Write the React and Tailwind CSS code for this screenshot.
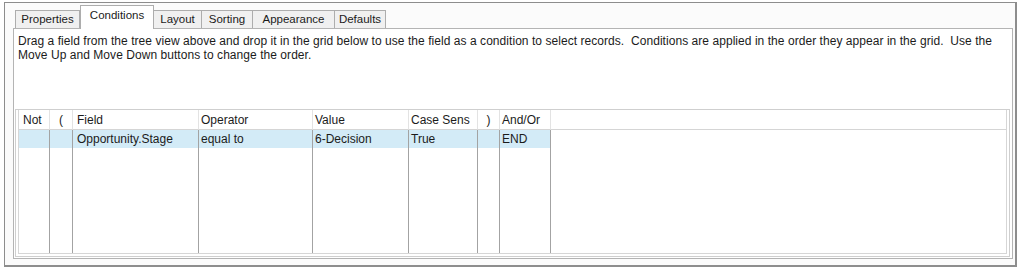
const tabs = ['Properties', 'Conditions', 'Layout', 'Sorting', 'Appearance', 'Defaults'];
const tabWidths = {
  Properties: 'w-[65px]',
  Conditions: 'w-[74px]',
  Layout: 'w-[48px]',
  Sorting: 'w-[51px]',
  Appearance: 'w-[82px]',
  Defaults: 'w-[51px]',
};

// column layout of the conditions grid
const columns = [
  { key: 'not', label: 'Not', w: 'w-[31px]', align: 'pl-[4px]', value: '' },
  { key: 'open', label: '(', w: 'w-[23px]', align: 'justify-center', value: '' },
  { key: 'field', label: 'Field', w: 'w-[126px]', align: 'pl-[4px]', value: 'Opportunity.Stage' },
  { key: 'op', label: 'Operator', w: 'w-[114px]', align: 'pl-[2px]', value: 'equal to' },
  { key: 'value', label: 'Value', w: 'w-[96px]', align: 'pl-[2px]', value: '6-Decision' },
  { key: 'case', label: 'Case Sens', w: 'w-[69px]', align: 'pl-[2px]', value: 'True' },
  { key: 'close', label: ')', w: 'w-[22px]', align: 'justify-center', value: '' },
  { key: 'andor', label: 'And/Or', w: 'w-[51px]', align: 'pl-[2px]', value: 'END' },
];

function Tab({ label, active }) {
  if (active) {
    return (
      <div
        className={`${tabWidths[label]} h-[24px] -mb-px relative z-10 bg-white border border-b-0 border-[#adadad] flex items-start justify-center pt-[4px]`}
      >
        {label}
      </div>
    );
  }
  return (
    <div
      className={`${tabWidths[label]} h-[18px] bg-[#f0f0f0] border border-b-0 border-l-0 first:border-l border-[#adadad] flex items-center justify-center`}
    >
      {label}
    </div>
  );
}

export default function App() {
  return (
    <div className="w-[1024px] h-[272px] bg-white pt-[2px] pl-[4px] font-['Liberation_Sans',Arial,sans-serif] text-[11.5px] text-[#1b1b1b] leading-none">
      <div className="w-[1013px] h-[265px] border border-[#8d8d8d] border-r-2 border-b-2 bg-[#fbfbfb] pl-[8px] pr-[2px] pt-[1px] pb-[6px] flex flex-col">
        {/* tab strip */}
        <div className="flex items-end h-[24px] pl-[2px]">
          {tabs.map((t) => (
            <Tab key={t} label={t} active={t === 'Conditions'} />
          ))}
        </div>

        {/* tab page */}
        <div className="flex-1 bg-white border border-[#b4b4b4] flex flex-col pl-[1px] pr-[2px] pb-px">
          <p className="pl-[3px] pt-[5px] pr-[4px] leading-[14px] text-[12px] tracking-[0.05px]">
            Drag a field from the tree view above and drop it in the grid below to use the field as a condition to select records.&nbsp; Conditions are applied in the order they appear in the grid.&nbsp; Use the Move Up and Move Down buttons to change the order.
          </p>

          {/* grid */}
          <div className="mt-auto h-[148px] border border-[#cfcfcf] p-[2px] pt-0 text-[12px]">
            <div className="h-full border-l border-r border-b border-[#d6d6d6] flex">
              {columns.map((c) => (
                <div key={c.key} className={`${c.w} flex flex-col`}>
                  <div className={`h-[20px] border-b border-r border-b-[#d5d5d5] border-r-[#e3e3e3] flex items-center ${c.align}`}>
                    {c.label}
                  </div>
                  <div className={`h-[18px] bg-[#d3ebf7] border-r border-[#a3a3a3] flex items-center ${c.align}`}>
                    {c.value}
                  </div>
                  <div className="flex-1 border-r border-[#a3a3a3]" />
                </div>
              ))}
              <div className="flex-1 flex flex-col">
                <div className="h-[20px] border-b border-[#d5d5d5]" />
                <div className="flex-1" />
              </div>
            </div>
          </div>
        </div>
      </div>
    </div>
  );
}
